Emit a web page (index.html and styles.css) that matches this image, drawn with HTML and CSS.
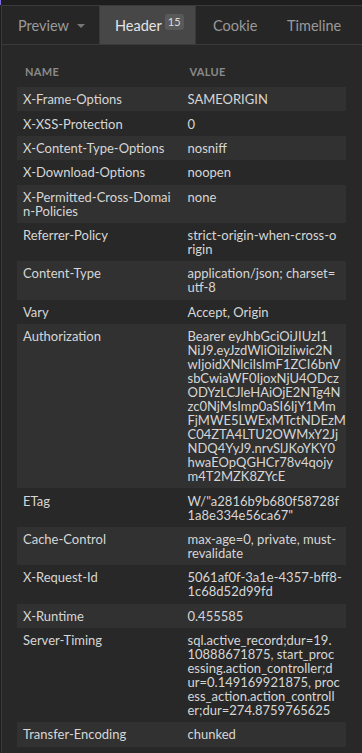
FILE: index.html
```html
<!DOCTYPE html>
<html lang="en">
<head>
  <meta charset="UTF-8">
  <meta name="viewport" content="width=device-width, initial-scale=1">
  <title>Response Headers</title>
  <link rel="stylesheet" href="styles.css">
</head>
<body>

  <div class="topbar"><span class="accent"></span></div>

  <div class="panel">
    <nav class="tabs">
      <a class="tab tab-preview">Preview<span class="caret"></span></a>
      <a class="tab tab-header active">Header<span class="badge">15</span></a>
      <a class="tab tab-cookie">Cookie</a>
      <a class="tab tab-timeline">Timeline</a>
    </nav>

    <main class="content">
      <table class="headers">
        <thead>
          <tr><th>Name</th><th>Value</th></tr>
        </thead>
        <tbody>
          <tr><td>X-Frame-Options</td><td>SAMEORIGIN</td></tr>
          <tr><td>X-XSS-Protection</td><td>0</td></tr>
          <tr><td>X-Content-Type-Options</td><td>nosniff</td></tr>
          <tr><td>X-Download-Options</td><td>noopen</td></tr>
          <tr><td>X-Permitted-Cross-Domai<br>n-Policies</td><td>none</td></tr>
          <tr><td>Referrer-Policy</td><td>strict-origin-when-cross-o<br>rigin</td></tr>
          <tr><td>Content-Type</td><td>application/json; charset=<br>utf-8</td></tr>
          <tr><td>Vary</td><td>Accept, Origin</td></tr>
          <tr>
            <td>Authorization</td>
            <td>Bearer eyJhbGciOiJIUzI1<br>NiJ9.eyJzdWliOiIzliwic2N<br>wIjoidXNlciIsImF1ZCI6bnV<br>sbCwiaWF0IjoxNjU4ODcz<br>ODYzLCJleHAiOjE2NTg4N<br>zc0NjMsImp0aSI6IjY1Mm<br>FjMWE5LWExMTctNDEzM<br>C04ZTA4LTU2OWMxY2Jj<br>NDQ4YyJ9.nrvSlJKoYKY0<br>hwaEOpQGHCr78v4qojy<br>m4T2MZK8ZYcE</td>
          </tr>
          <tr><td>ETag</td><td>W/"a2816b9b680f58728f<br>1a8e334e56ca67"</td></tr>
          <tr><td>Cache-Control</td><td>max-age=0, private, must-<br>revalidate</td></tr>
          <tr><td>X-Request-Id</td><td>5061af0f-3a1e-4357-bff8-<br>1c68d52d99fd</td></tr>
          <tr><td>X-Runtime</td><td>0.455585</td></tr>
          <tr>
            <td>Server-Timing</td>
            <td>sql.active_record;dur=19.<br>10888671875, start_proc<br>essing.action_controller;d<br>ur=0.149169921875, proc<br>ess_action.action_controll<br>er;dur=274.8759765625</td>
          </tr>
          <tr><td>Transfer-Encoding</td><td>chunked</td></tr>
        </tbody>
      </table>
    </main>
  </div>

</body>
</html>
```

FILE: styles.css
```css
html, body {
  height: 100%;
}
body {
  margin: 0;
  background-color: #1e1e1e;
  font-family: Lato, "Open Sans", sans-serif;
  font-size: 13px;
  color: #d6d6d6;
}
.topbar {
  height: 5px;
  position: relative;
}
.accent {
  position: absolute;
  left: 0;
  top: 0;
  width: 1px;
  height: 5px;
  background-color: #7a6ee0;
}
.panel {
  margin-left: 1px;
  border-left: 1px solid #3a3a3a;
  background-color: #282828;
  min-height: calc(100% - 5px);
}
/* Tabs */
.tabs {
  display: flex;
  height: 38px;
  border-top: 1px solid #3a3a3a;
  border-bottom: 1px solid #3a3a3a;
  background-color: #262626;
}
.tab {
  display: flex;
  align-items: center;
  box-sizing: border-box;
  padding-left: 17px;
  font-size: 14.5px;
  color: #9a9a9a;
  cursor: pointer;
}
.tab-preview { width: 97px; padding-left: 16px; }
.tab-header { width: 97px; }
.tab-cookie { width: 74px; }
.tab-timeline { width: 84px; }
.tab.active {
  background-color: #474747;
  color: #e4e4e4;
  padding-left: 15px;
  border-left: 1px solid #3a3a3a;
  border-right: 1px solid #3a3a3a;
}
.caret {
  display: inline-block;
  margin-left: 8px;
  margin-top: 1px;
  border-left: 4px solid transparent;
  border-right: 4px solid transparent;
  border-top: 4px solid #777;
}
.badge {
  align-self: flex-start;
  margin: 8px 0 0 3px;
  padding: 0 3px;
  line-height: 16px;
  font-size: 11px;
  border-radius: 3px;
  background-color: #595959;
  color: #dcdcdc;
}
/* Header table */
.content {
  padding: 12px 16px 0 15px;
}
.headers {
  width: 100%;
  border-collapse: collapse;
  table-layout: fixed;
}
.headers th {
  padding: 8px 8px;
  line-height: 14px;
  text-align: left;
  text-transform: uppercase;
  font-size: 11px;
  font-weight: bold;
  letter-spacing: 0.3px;
  color: #8a8a8a;
}
.headers td {
  padding: 5.2px 6px;
  line-height: 14px;
  vertical-align: top;
  white-space: nowrap;
}
.headers tbody tr:nth-child(odd) {
  background-color: #313131;
}
```
